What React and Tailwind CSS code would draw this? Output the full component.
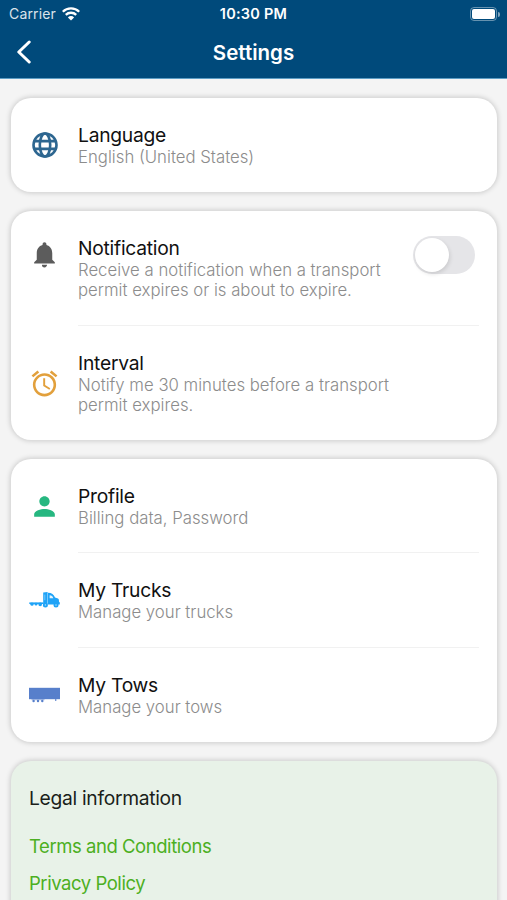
import { useState } from 'react';
import { MdAlarm, MdNotifications, MdPerson } from 'react-icons/md';

const GlobeIcon = () => (
  <svg viewBox="0 0 26 26" className="size-[26px]" fill="none" stroke="#2d6690" strokeWidth="2.6">
    <circle cx="13" cy="13" r="11.5" />
    <ellipse cx="13" cy="13" rx="5.2" ry="11.5" />
    <path d="M2.2 9.1h21.6M2.2 16.9h21.6" />
  </svg>
);

const TruckIcon = () => (
  <svg viewBox="0 0 31 16" className="w-[31px] h-4" fill="#1fa3f7">
    <path d="M0.3 10.4h14v1.6H0.3z" />
    <circle cx="3" cy="12.2" r="1.6" />
    <circle cx="7" cy="12.2" r="1.4" />
    <circle cx="11.2" cy="12.4" r="1.8" />
    <path d="M14.2 11.8V.5l4.4-.5v12.3h-4.4z" />
    <path d="M15.8 2.6v5.6" stroke="#8bd0fb" strokeWidth=".8" />
    <path d="M19 .8c3.8.2 5.8 1.5 7 4.8l3 1c.8.4 1 1.4 1 3.2l.8.6v2H19z" />
    <path d="M20.6 3.3c2 .1 3 .9 3.7 2.9h-3.7z" fill="#e3f4fe" />
    <circle cx="16.4" cy="12.9" r="2.5" />
    <circle cx="27" cy="13" r="2.5" />
    <circle cx="16.4" cy="12.9" r=".7" fill="#bfe5fd" />
    <circle cx="27" cy="13" r=".7" fill="#bfe5fd" />
  </svg>
);

const TowIcon = () => (
  <svg viewBox="0 0 31 17" className="w-[31px] h-[17px]" fill="#577fcb">
    <path d="M0 .8h31v11.4H0z" />
    <path d="M2.5 12.2h13v1h-13z" opacity=".6" />
    <circle cx="4.6" cy="14" r="1.2" />
    <circle cx="9" cy="14" r="1.2" />
    <circle cx="13.3" cy="14" r="1.2" />
    <path d="M26.2 12h1.1v1.9h-1.1z" />
  </svg>
);

const StatusBar = () => (
  <div className="grid h-7 grid-cols-[1fr_auto_1fr] items-center text-sm leading-none">
    <div className="flex items-center pl-[9px]">
      <span className="tracking-[0.15px] opacity-85">Carrier</span>
      <svg viewBox="0 0 18 14" className="-mt-px ml-1.5 w-[18px] h-3.5" fill="none" stroke="white" strokeWidth="2.3">
        <path d="M.8 4.8a11.6 11.6 0 0 1 16.4 0" />
        <path d="M3.8 7.9a7.4 7.4 0 0 1 10.4 0" />
        <path d="M9 13.4L5.9 10.4a4.4 4.4 0 0 1 6.2 0z" fill="white" stroke="none" />
      </svg>
    </div>
    <span className="text-[14.5px] font-semibold tracking-[0.25px]">10:30 PM</span>
    <div className="flex items-center justify-end pr-[7px]">
      <div className="-mt-px h-3.5 w-[27px] rounded-[4px] border border-white/40 p-px">
        <div className="h-full rounded-[2px] bg-white" />
      </div>
      <div className="ml-px h-[5px] w-0.5 rounded-r-full bg-white/50" />
    </div>
  </div>
);

const Card = ({ children, className }) => (
  <section className={`rounded-[20px] shadow-[0_0_5px_1px_rgba(0,0,0,0.17)] ${className}`}>{children}</section>
);

const Row = ({ icon, title, lines, className, children }) => (
  <div className={`flex items-center ${className}`}>
    <div className="flex w-[67px] shrink-0 justify-center">{icon}</div>
    <div className="flex-1">
      <h2 className="pt-px pb-px text-[19.25px] leading-[22px] tracking-[-0.25px] text-[#111] whitespace-nowrap">{title}</h2>
      {lines.map((line) => (
        <p key={line} className="text-[16.75px] leading-[20.5px] font-light text-[#8c8c8c] whitespace-nowrap">{line}</p>
      ))}
    </div>
    {children}
  </div>
);

const Divider = () => <div className="ml-[67px] mr-[18px] h-px bg-[#f1f1f1]" />;

export default function App() {
  const [enabled, setEnabled] = useState(false);

  return (
    <div className="h-[900px] overflow-hidden bg-[#f4f4f4] font-['Inter',sans-serif]">
      <header className="h-[79px] border-b border-[#5d9dc4] bg-[#004a7b] text-white">
        <StatusBar />
        <div className="grid h-12 grid-cols-[1fr_auto_1fr] items-center">
          <button className="pl-4 cursor-pointer">
            <svg viewBox="0 0 16 24" className="w-4 h-6" fill="none" stroke="white" strokeWidth="3" strokeLinecap="round" strokeLinejoin="round">
              <path d="M13.2 2L2.8 12l10.4 10" />
            </svg>
          </button>
          <h1 className="pt-0.5 text-[20.5px] font-semibold">Settings</h1>
          <div />
        </div>
      </header>

      <main className="flex flex-col gap-[19px] pt-[19px] pl-[11px] pr-2.5">
        <Card className="bg-white">
          <Row className="h-[94px]" icon={<GlobeIcon />} title="Language" lines={['English (United States)']} />
        </Card>

        <Card className="bg-white">
          <Row
            className="h-[114px]"
            icon={<MdNotifications size={31} color="#5c5c5c" className="-mt-7" />}
            title="Notification"
            lines={['Receive a notification when a transport', 'permit expires or is about to expire.']}
          >
            <button
              role="switch"
              aria-checked={enabled}
              onClick={() => setEnabled(!enabled)}
              className={`mr-[22px] -mt-[26px] h-[38px] w-[62px] rounded-full p-0.5 cursor-pointer ${enabled ? 'bg-green-500' : 'bg-[#e5e5e8]'}`}
            >
              <div className={`size-[34px] rounded-full bg-white shadow-[1px_2px_4px_rgba(0,0,0,0.12)] ${enabled ? 'ml-6' : ''}`} />
            </button>
          </Row>
          <Divider />
          <Row
            className="h-[114px]"
            icon={<MdAlarm size={31} color="#e2a03c" />}
            title="Interval"
            lines={['Notify me 30 minutes before a transport', 'permit expires.']}
          />
        </Card>

        <Card className="bg-white">
          <Row className="h-[93px] pt-px" icon={<MdPerson size={31} color="#26b780" />} title="Profile" lines={['Billing data, Password']} />
          <Divider />
          <Row className="h-[94px]" icon={<TruckIcon />} title="My Trucks" lines={['Manage your trucks']} />
          <Divider />
          <Row className="h-[94px]" icon={<TowIcon />} title="My Tows" lines={['Manage your tows']} />
        </Card>

        <Card className="h-[180px] bg-[#e8f2e8] pl-[18px] pt-[25px]">
          <h2 className="text-[19.25px] leading-6 tracking-[-0.3px] text-[#1a1f1a]">Legal information</h2>
          <a className="mt-6 block text-[18.5px] leading-6 tracking-[-0.45px] text-[#4caf22]">Terms and Conditions</a>
          <a className="mt-[13px] block text-[18.5px] leading-6 tracking-[-0.45px] text-[#4caf22]">Privacy Policy</a>
        </Card>
      </main>
    </div>
  );
}
